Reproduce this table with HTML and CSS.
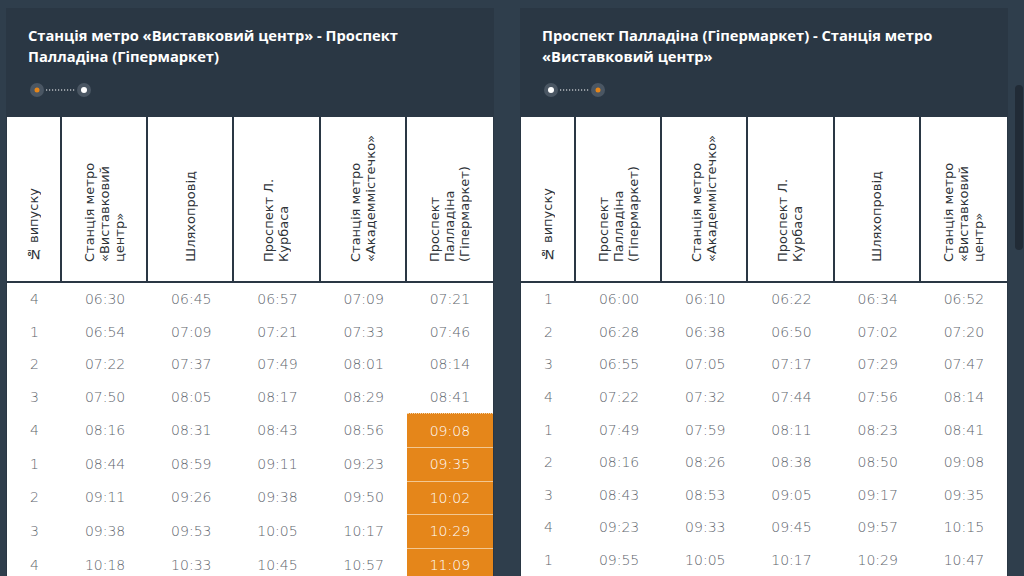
FILE: index.html
```html
<!DOCTYPE html>
<html lang="uk">
<head>
<meta charset="utf-8">
<title>Розклад</title>
<link rel="stylesheet" href="styles.css">
</head>
<body>
<div class="page">
  <section class="card">
    <div class="card-head">
      <h2 class="title">Станція метро «Виставковий центр» - Проспект Палладіна (Гіпермаркет)</h2>
      <svg class="route" width="62" height="14" viewBox="0 0 62 14">
        <circle cx="7" cy="7" r="7" fill="#4a5663"/>
        <circle cx="7" cy="7" r="2.5" fill="#e5861a"/>
        <line x1="16" y1="7" x2="46" y2="7" stroke="#ffffff" stroke-width="1.2" stroke-dasharray="1.2 1.8"/>
        <circle cx="54" cy="7" r="7" fill="#4a5663"/>
        <circle cx="54" cy="7" r="3" fill="#ffffff"/>
      </svg>
    </div>
    <table class="sched">
      <colgroup><col class="c-num"><col><col><col><col><col></colgroup>
      <thead>
        <tr>
          <th><span>№ випуску</span></th>
          <th><span>Станція метро «Виставковий центр»</span></th>
          <th><span>Шляхопровід</span></th>
          <th><span>Проспект Л. Курбаса</span></th>
          <th><span>Станція метро «Академмістечко»</span></th>
          <th><span>Проспект Палладіна (Гіпермаркет)</span></th>
        </tr>
      </thead>
      <tbody>
        <tr><td>4</td><td>06:30</td><td>06:45</td><td>06:57</td><td>07:09</td><td>07:21</td></tr>
        <tr><td>1</td><td>06:54</td><td>07:09</td><td>07:21</td><td>07:33</td><td>07:46</td></tr>
        <tr><td>2</td><td>07:22</td><td>07:37</td><td>07:49</td><td>08:01</td><td>08:14</td></tr>
        <tr><td>3</td><td>07:50</td><td>08:05</td><td>08:17</td><td>08:29</td><td>08:41</td></tr>
        <tr><td>4</td><td>08:16</td><td>08:31</td><td>08:43</td><td>08:56</td><td class="hl first">09:08</td></tr>
        <tr><td>1</td><td>08:44</td><td>08:59</td><td>09:11</td><td>09:23</td><td class="hl">09:35</td></tr>
        <tr><td>2</td><td>09:11</td><td>09:26</td><td>09:38</td><td>09:50</td><td class="hl">10:02</td></tr>
        <tr><td>3</td><td>09:38</td><td>09:53</td><td>10:05</td><td>10:17</td><td class="hl">10:29</td></tr>
        <tr><td>4</td><td>10:18</td><td>10:33</td><td>10:45</td><td>10:57</td><td class="hl">11:09</td></tr>
      </tbody>
    </table>
  </section>
  <section class="card">
    <div class="card-head">
      <h2 class="title">Проспект Палладіна (Гіпермаркет) - Станція метро «Виставковий центр»</h2>
      <svg class="route" width="62" height="14" viewBox="0 0 62 14">
        <circle cx="7" cy="7" r="7" fill="#4a5663"/>
        <circle cx="7" cy="7" r="3" fill="#ffffff"/>
        <line x1="16" y1="7" x2="46" y2="7" stroke="#ffffff" stroke-width="1.2" stroke-dasharray="1.2 1.8"/>
        <circle cx="54" cy="7" r="7" fill="#4a5663"/>
        <circle cx="54" cy="7" r="2.5" fill="#e5861a"/>
      </svg>
    </div>
    <table class="sched">
      <colgroup><col class="c-num"><col><col><col><col><col></colgroup>
      <thead>
        <tr>
          <th><span>№ випуску</span></th>
          <th><span>Проспект Палладіна (Гіпермаркет)</span></th>
          <th><span>Станція метро «Академмістечко»</span></th>
          <th><span>Проспект Л. Курбаса</span></th>
          <th><span>Шляхопровід</span></th>
          <th><span>Станція метро «Виставковий центр»</span></th>
        </tr>
      </thead>
      <tbody>
        <tr><td>1</td><td>06:00</td><td>06:10</td><td>06:22</td><td>06:34</td><td>06:52</td></tr>
        <tr><td>2</td><td>06:28</td><td>06:38</td><td>06:50</td><td>07:02</td><td>07:20</td></tr>
        <tr><td>3</td><td>06:55</td><td>07:05</td><td>07:17</td><td>07:29</td><td>07:47</td></tr>
        <tr><td>4</td><td>07:22</td><td>07:32</td><td>07:44</td><td>07:56</td><td>08:14</td></tr>
        <tr><td>1</td><td>07:49</td><td>07:59</td><td>08:11</td><td>08:23</td><td>08:41</td></tr>
        <tr><td>2</td><td>08:16</td><td>08:26</td><td>08:38</td><td>08:50</td><td>09:08</td></tr>
        <tr><td>3</td><td>08:43</td><td>08:53</td><td>09:05</td><td>09:17</td><td>09:35</td></tr>
        <tr><td>4</td><td>09:23</td><td>09:33</td><td>09:45</td><td>09:57</td><td>10:15</td></tr>
        <tr><td>1</td><td>09:55</td><td>10:05</td><td>10:17</td><td>10:29</td><td>10:47</td></tr>
      </tbody>
    </table>
  </section>
</div>
<div class="scrollbar"><div class="thumb"></div></div>
</body>
</html>
```

FILE: styles.css
```css
html, body {
  margin: 0;
  padding: 0;
  height: 100%;
  overflow: hidden;
  background: #2f3e4c;
  font-family: "Open Sans", "Noto Sans", sans-serif;
}

.page {
  display: flex;
  gap: 26px;
  padding: 8px 16px 0 6px;
  align-items: flex-start;
}

.card {
  flex: 1 1 0;
  min-width: 0;
  background: #2a3744;
  padding: 0 1px;
}

.card-head {
  padding: 17px 21px 20px 21px;
}

.title {
  margin: 0;
  color: #ffffff;
  font-size: 14.7px;
  line-height: 21px;
  font-weight: 700;
}

.route {
  display: block;
  margin: 16px 0 0 2px;
}

.sched {
  width: 100%;
  table-layout: fixed;
  border-collapse: separate;
  border-spacing: 0;
  background: #ffffff;
}

.c-num {
  width: 55px;
}

.sched th {
  height: 166px;
  box-sizing: border-box;
  padding: 10px 0 14px 0;
  background: #ffffff;
  vertical-align: bottom;
  text-align: center;
  border-right: 2px solid #2a3744;
  border-bottom: 2px solid #2a3744;
}

.sched th:last-child {
  border-right: 0;
}

.sched th span {
  display: inline-block;
  writing-mode: vertical-rl;
  transform: rotate(180deg);
  max-height: 120px;
  text-align: start;
  font-family: "DejaVu Sans", "Open Sans", sans-serif;
  font-size: 13px;
  line-height: 15px;
  font-weight: 400;
  color: #2e3338;
}

.sched td {
  height: 32.6px;
  padding: 0;
  text-align: center;
  vertical-align: middle;
  font-family: "DejaVu Sans", "Open Sans", sans-serif;
  font-size: 14px;
  font-weight: 200;
  color: #60656d;
}

.sched td.hl {
  background: #e5861a;
  color: #ffffff;
  border-top: 1px solid #f2c792;
}

.sched td.hl.first {
  border-top: 1px dotted #f2d3ad;
}

.scrollbar {
  position: fixed;
  top: 0;
  right: 0;
  width: 10px;
  height: 100%;
}

.thumb {
  position: absolute;
  top: 85px;
  left: 1px;
  width: 8px;
  height: 165px;
  border-radius: 4px;
  background: #212b36;
}
```
